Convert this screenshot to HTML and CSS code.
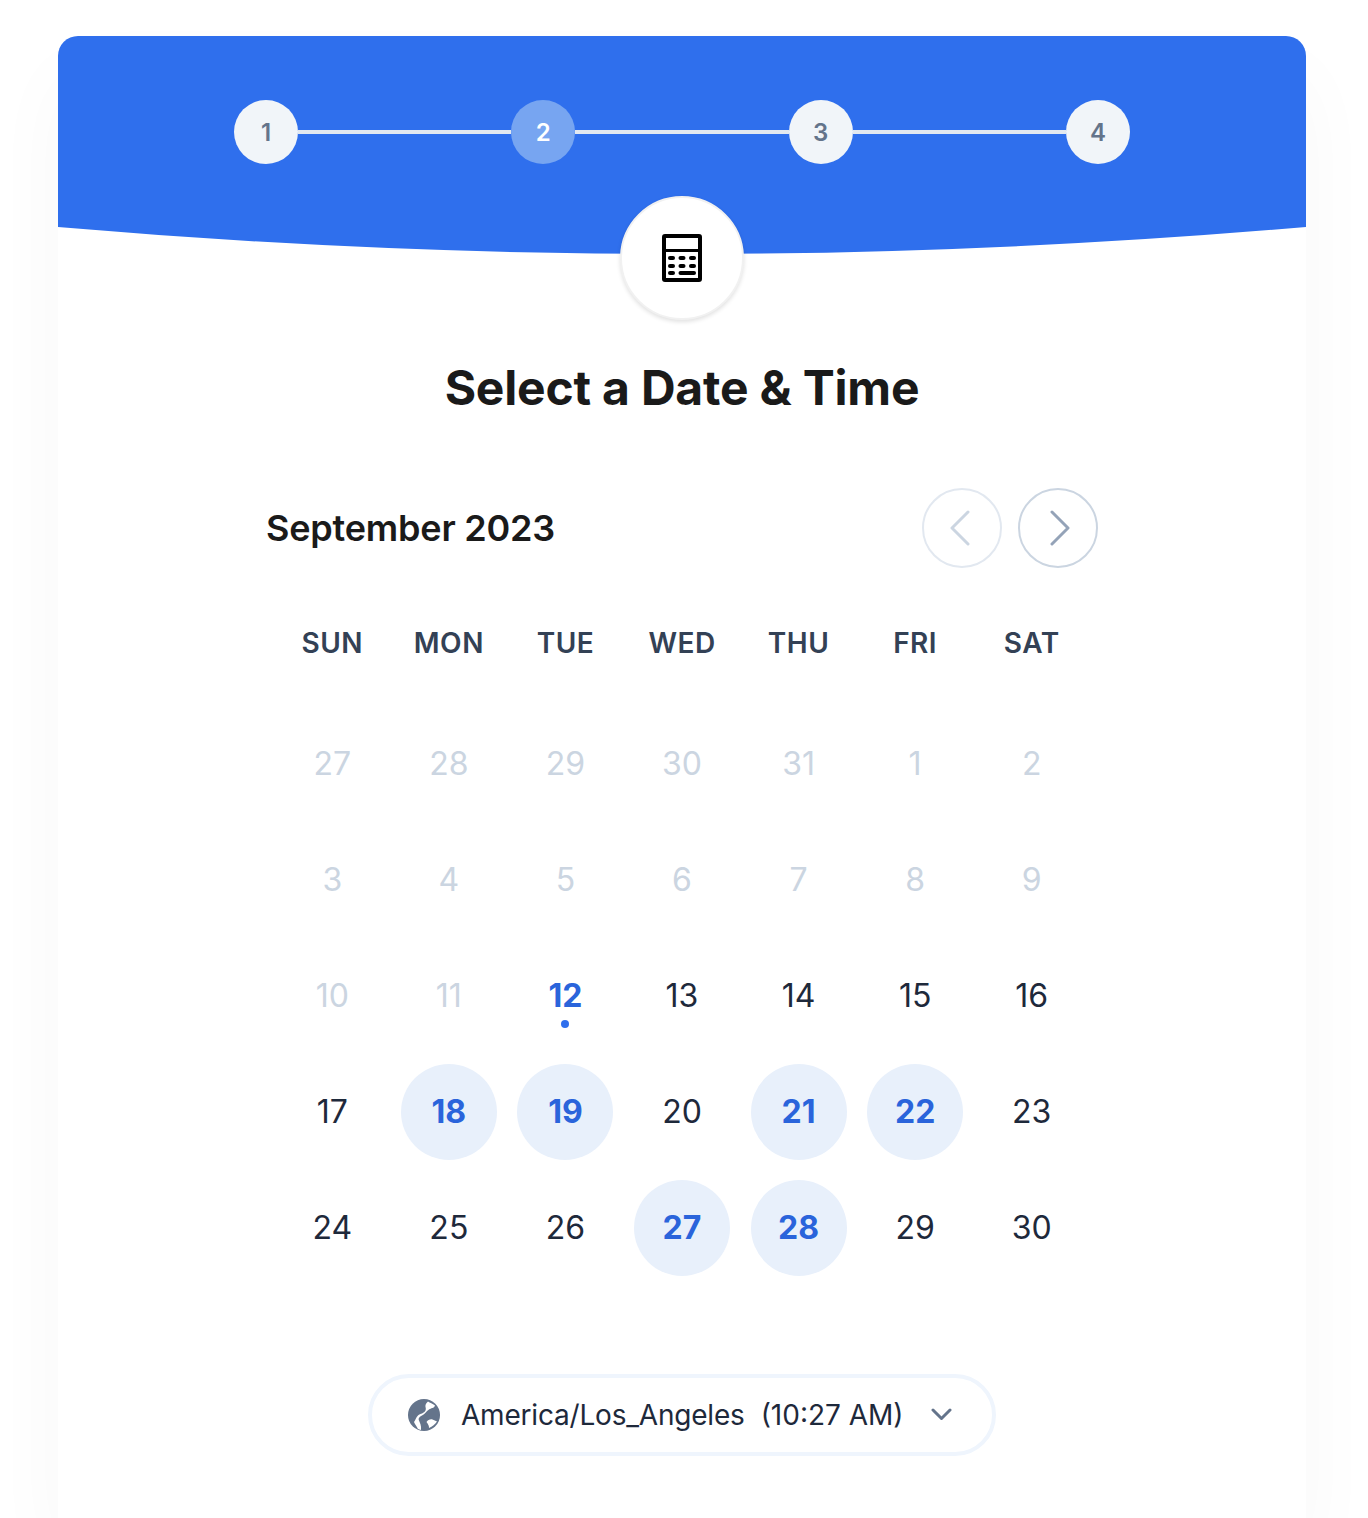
FILE: index.html
```html
<!DOCTYPE html>
<html lang="en">
<head>
    <meta charset="UTF-8">
    <title>Select a Date &amp; Time</title>
    <link rel="stylesheet" href="styles.css">
</head>
<body>
    <div class="card">
        <div class="header">
            <div class="steps">
                <div class="step">1</div>
                <div class="line"></div>
                <div class="step current">2</div>
                <div class="line"></div>
                <div class="step">3</div>
                <div class="line"></div>
                <div class="step">4</div>
            </div>
        </div>
        <svg class="wave" viewBox="0 0 1248 27" preserveAspectRatio="none">
            <path d="M0 0H1248Q624 54 0 0Z" fill="#2f6fed"/>
        </svg>
        <div class="icon-circle">
            <svg width="40" height="48" viewBox="0 0 40 48">
                <rect x="2" y="2" width="36" height="44" rx="1" fill="#fff" stroke="#000" stroke-width="4"/>
                <rect x="2" y="15" width="36" height="3" fill="#000"/>
                <g fill="#000">
                    <rect x="6" y="22" width="7" height="4" rx="2"/>
                    <rect x="16.500" y="22" width="7" height="4" rx="2"/>
                    <rect x="27" y="22" width="7" height="4" rx="2"/>
                    <rect x="6" y="30" width="7" height="4" rx="2"/>
                    <rect x="16.500" y="30" width="7" height="4" rx="2"/>
                    <rect x="27" y="30" width="7" height="4" rx="2"/>
                    <rect x="6" y="37" width="7" height="4" rx="2"/>
                    <rect x="16.500" y="37" width="17.500" height="4" rx="2"/>
                </g>
            </svg>
        </div>
        <h1>Select a Date &amp; Time</h1>

        <div class="calendar">
            <div class="month-row">
                <h2>September 2023</h2>
                <div class="nav">
                    <button class="nav-btn disabled">
                        <svg width="24" height="36" viewBox="0 0 24 36"><path d="M18 2L2 18L18 34" fill="none" stroke="#cbd5e1" stroke-width="3" stroke-linecap="round" stroke-linejoin="round"/></svg>
                    </button>
                    <button class="nav-btn">
                        <svg width="24" height="36" viewBox="0 0 24 36"><path d="M6 2L22 18L6 34" fill="none" stroke="#94a3b8" stroke-width="3" stroke-linecap="round" stroke-linejoin="round"/></svg>
                    </button>
                </div>
            </div>

            <div class="days">
                <div class="dow">SUN</div>
                <div class="dow">MON</div>
                <div class="dow">TUE</div>
                <div class="dow">WED</div>
                <div class="dow">THU</div>
                <div class="dow">FRI</div>
                <div class="dow">SAT</div>

                <div class="day off">27</div>
                <div class="day off">28</div>
                <div class="day off">29</div>
                <div class="day off">30</div>
                <div class="day off">31</div>
                <div class="day off">1</div>
                <div class="day off">2</div>

                <div class="day off">3</div>
                <div class="day off">4</div>
                <div class="day off">5</div>
                <div class="day off">6</div>
                <div class="day off">7</div>
                <div class="day off">8</div>
                <div class="day off">9</div>

                <div class="day off">10</div>
                <div class="day off">11</div>
                <div class="day today">12</div>
                <div class="day">13</div>
                <div class="day">14</div>
                <div class="day">15</div>
                <div class="day">16</div>

                <div class="day">17</div>
                <div class="day open">18</div>
                <div class="day open">19</div>
                <div class="day">20</div>
                <div class="day open">21</div>
                <div class="day open">22</div>
                <div class="day">23</div>

                <div class="day">24</div>
                <div class="day">25</div>
                <div class="day">26</div>
                <div class="day open">27</div>
                <div class="day open">28</div>
                <div class="day">29</div>
                <div class="day">30</div>
            </div>

            <div class="tz-row">
                <div class="tz">
                    <svg class="globe" width="32" height="32" viewBox="0 0 32 32">
                        <circle cx="16" cy="16" r="16" fill="#64748b"/>
                        <path d="M20 2.500C22 4 24.500 4.500 27 6.500C26 9.500 23 9 21 10.500C18 12.500 17 15 14 16.500C11.500 18 10 19 11 21.500C12 24 13.500 26.500 13 31L10 30C8.500 27 7 25.500 6 23C7.500 21 8 18.500 10 16.500C12.500 14.500 16 14.500 17.500 11.500C18.500 9.500 17 8 17.500 6C18 4.500 19 3.500 20 2.500Z" fill="#fff"/>
                        <path d="M18.500 23C20 21 22 20 24.500 20.500C26 21 27.500 22 29 22.500C27 25.500 24.500 27.500 21 29C21 27 20.500 25.500 18.500 23Z" fill="#fff"/>
                    </svg>
                    <span class="tz-name">America/Los_Angeles</span>
                    <span class="tz-time">(10:27 AM)</span>
                    <svg class="chev" width="22" height="14" viewBox="0 0 22 14"><path d="M2 2L10.500 10.500L19 2" fill="none" stroke="#64748b" stroke-width="3" stroke-linecap="round" stroke-linejoin="round"/></svg>
                </div>
            </div>
        </div>
    </div>
</body>
</html>
```

FILE: styles.css
```css
html, body {
    height: 1518px;
    overflow: hidden;
}
body {
    margin: 0;
    padding: 36px 62px 0 58px;
    box-sizing: border-box;
    background-color: #fff;
    font-family: Inter, "Liberation Sans", sans-serif;
    color: #1e293b;
}
.card {
    background-color: #fff;
    border-radius: 20px 20px 0 0;
    box-shadow: 0 40px 80px rgba(15, 23, 42, 0.03);
    height: 1482px;
}
.header {
    background-color: #2f6fed;
    border-radius: 20px 20px 0 0;
    height: 191px;
    padding-top: 64px;
    box-sizing: border-box;
}
.wave {
    display: block;
    width: 100%;
    height: 27px;
}
.steps {
    display: flex;
    align-items: center;
    width: 896px;
    margin: 0 auto;
}
.step {
    width: 64px;
    height: 64px;
    flex: none;
    border-radius: 50%;
    background-color: #f1f5f9;
    color: #64748b;
    font-size: 24px;
    font-weight: 600;
    display: flex;
    align-items: center;
    justify-content: center;
}
.step.current {
    background-color: #77a5f1;
    color: #fff;
}
.line {
    flex: 1;
    height: 4px;
    background-color: #e2e8f0;
}
.icon-circle {
    width: 120px;
    height: 120px;
    margin: -58px auto 0;
    border-radius: 50%;
    background-color: #fff;
    border: 2px solid #f1f1f1;
    box-shadow: 0 2px 4px rgba(0, 0, 0, 0.12);
    display: flex;
    align-items: center;
    justify-content: center;
    position: relative;
}
h1 {
    margin: 40px 0 0;
    text-align: center;
    font-size: 48px;
    line-height: 56px;
    font-weight: 700;
    letter-spacing: -0.2px;
    color: #1a1a1a;
}
.calendar {
    width: 832px;
    margin: 72px auto 0;
}
.month-row {
    display: flex;
    justify-content: space-between;
    align-items: center;
}
h2 {
    margin: 0;
    font-size: 36px;
    font-weight: 600;
    letter-spacing: -0.2px;
    color: #1a1a1a;
}
.nav {
    display: flex;
    gap: 16px;
}
.nav-btn {
    width: 80px;
    height: 80px;
    padding: 0;
    border-radius: 50%;
    border: 2px solid #cbd5e1;
    background-color: #fff;
    display: flex;
    align-items: center;
    justify-content: center;
}
.nav-btn.disabled {
    border-color: #e2e8f0;
}
.days {
    display: grid;
    grid-template-columns: repeat(7, 1fr);
    grid-template-rows: 126px;
    grid-auto-rows: 116px;
    margin: 12px 8px 0;
    justify-items: center;
    align-items: center;
}
.dow {
    font-size: 28px;
    font-weight: 600;
    letter-spacing: 0.5px;
    color: #334155;
}
.day {
    width: 96px;
    height: 96px;
    box-sizing: border-box;
    padding-bottom: 2px;
    border-radius: 50%;
    font-size: 32px;
    display: flex;
    align-items: center;
    justify-content: center;
    position: relative;
}
.day.off {
    color: #cbd5e1;
}
.day.open {
    background-color: #e8f0fb;
    color: #2a64db;
    font-weight: 700;
}
.day.today {
    color: #2a64db;
    font-weight: 700;
}
.day.today::after {
    content: "";
    position: absolute;
    left: 44px;
    top: 72px;
    width: 8px;
    height: 8px;
    border-radius: 50%;
    background-color: #2f6fed;
}
.tz-row {
    display: flex;
    justify-content: center;
    margin-top: 88px;
}
.tz {
    width: 628px;
    height: 82px;
    box-sizing: border-box;
    border: 4px solid #eff5fd;
    border-radius: 41px;
    display: flex;
    align-items: center;
    padding-left: 36px;
    font-size: 28px;
    color: #1e293b;
}
.globe {
    margin-right: 21px;
}
.tz-name {
    letter-spacing: -0.2px;
}
.tz-time {
    margin-left: 16px;
}
.chev {
    margin-left: 27px;
}
```
